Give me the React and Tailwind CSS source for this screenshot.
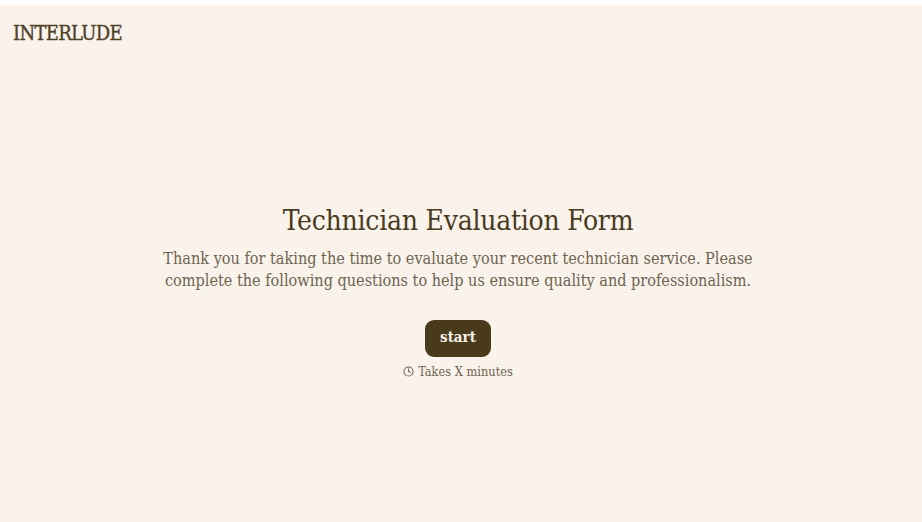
import { Clock } from 'lucide-react';

export default function App() {
  return (
    <div className="h-[522px] bg-white pt-[5px] overflow-hidden font-['DejaVu_Serif_Condensed','DejaVu_Serif',serif]">
      <div className="h-full flex flex-col bg-[#faf3ec]">
        <header className="px-[13px] pt-[15px] h-[50px] text-[20px] leading-[26px] tracking-[-0.7px] [-webkit-text-stroke:0.35px_#4f4127] text-[#4f4127]">
          INTERLUDE
        </header>
        <main className="flex flex-col items-center pt-[148px] pr-[6px]">
          <h1 className="text-[28px] leading-[36px] tracking-[-0.25px] text-[#4a3a1e]">Technician Evaluation Form</h1>
          <p className="mt-[9px] w-[620px] text-center text-[16.1px] leading-[22px] text-[#6e6450]">
            Thank you for taking the time to evaluate your recent technician service. Please complete the following questions to help us ensure quality and professionalism.
          </p>
          <button className="mt-[28px] w-[66px] h-[37px] pb-[2px] rounded-[9px] bg-[#4a3a1c] text-[#f9f2eb] text-[15px] font-bold">
            start
          </button>
          <div className="mt-[7px] flex items-center gap-[4px] text-[12.7px] leading-[16px] text-[#6e6450]">
            <Clock className="w-[11px] h-[11px] mb-[2px]" strokeWidth={2.2} />
            <span>Takes X minutes</span>
          </div>
        </main>
      </div>
    </div>
  );
}
